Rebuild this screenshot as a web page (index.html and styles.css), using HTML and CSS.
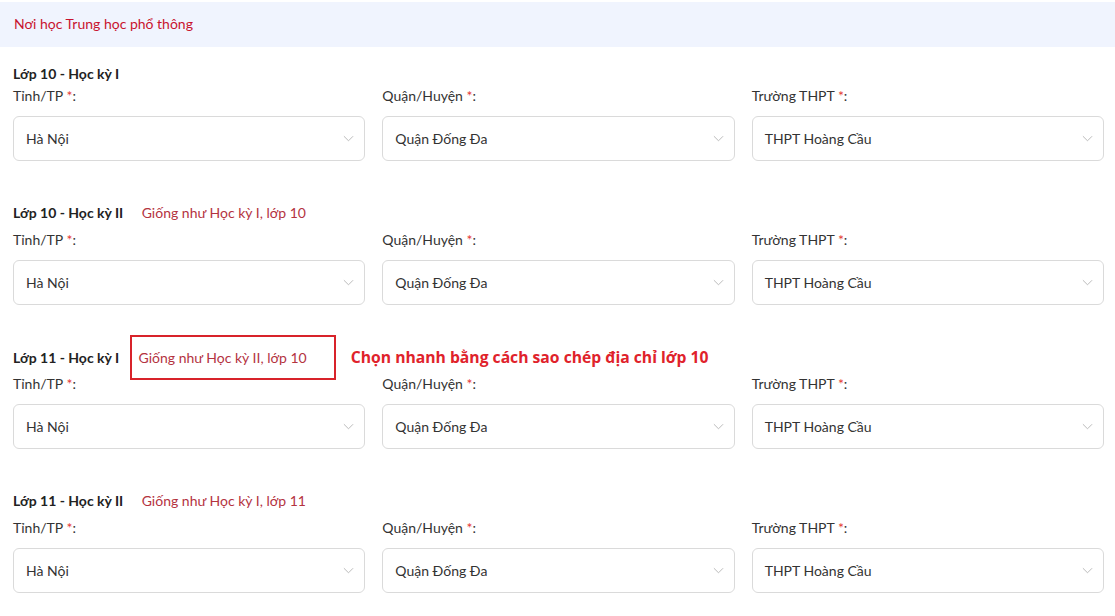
FILE: index.html
```html
<!DOCTYPE html>
<html lang="vi">
<head>
    <meta charset="UTF-8">
    <title>Nơi học Trung học phổ thông</title>
    <link rel="stylesheet" href="styles.css">
</head>
<body>
    <div class="panel-header">Nơi học Trung học phổ thông</div>

    <div class="school-form">
        <!-- Lớp 10 - HK I -->
        <div class="term">
            <div class="term-title">Lớp 10 - Học kỳ I</div>
            <div class="field-grid">
                <div class="field">
                    <label>Tỉnh/TP <span class="req">*</span>:</label>
                    <div class="select"><span>Hà Nội</span><svg class="chev" viewBox="0 0 12 7"><path d="M1 1l5 5 5-5"/></svg></div>
                </div>
                <div class="field">
                    <label>Quận/Huyện <span class="req">*</span>:</label>
                    <div class="select"><span>Quận Đống Đa</span><svg class="chev" viewBox="0 0 12 7"><path d="M1 1l5 5 5-5"/></svg></div>
                </div>
                <div class="field">
                    <label>Trường THPT <span class="req">*</span>:</label>
                    <div class="select"><span>THPT Hoàng Cầu</span><svg class="chev" viewBox="0 0 12 7"><path d="M1 1l5 5 5-5"/></svg></div>
                </div>
            </div>
        </div>

        <!-- Lớp 10 - HK II -->
        <div class="term">
            <div class="term-title">Lớp 10 - Học kỳ II <a class="copy-link">Giống như Học kỳ I, lớp 10</a></div>
            <div class="field-grid">
                <div class="field">
                    <label>Tỉnh/TP <span class="req">*</span>:</label>
                    <div class="select"><span>Hà Nội</span><svg class="chev" viewBox="0 0 12 7"><path d="M1 1l5 5 5-5"/></svg></div>
                </div>
                <div class="field">
                    <label>Quận/Huyện <span class="req">*</span>:</label>
                    <div class="select"><span>Quận Đống Đa</span><svg class="chev" viewBox="0 0 12 7"><path d="M1 1l5 5 5-5"/></svg></div>
                </div>
                <div class="field">
                    <label>Trường THPT <span class="req">*</span>:</label>
                    <div class="select"><span>THPT Hoàng Cầu</span><svg class="chev" viewBox="0 0 12 7"><path d="M1 1l5 5 5-5"/></svg></div>
                </div>
            </div>
        </div>

        <!-- Lớp 11 - HK I (có chú thích) -->
        <div class="term">
            <div class="term-title">Lớp 11 - Học kỳ I <a class="copy-link marked">Giống như Học kỳ II, lớp 10</a><span class="note">Chọn nhanh bằng cách sao chép địa chỉ lớp 10</span></div>
            <div class="field-grid">
                <div class="field">
                    <label>Tỉnh/TP <span class="req">*</span>:</label>
                    <div class="select"><span>Hà Nội</span><svg class="chev" viewBox="0 0 12 7"><path d="M1 1l5 5 5-5"/></svg></div>
                </div>
                <div class="field">
                    <label>Quận/Huyện <span class="req">*</span>:</label>
                    <div class="select"><span>Quận Đống Đa</span><svg class="chev" viewBox="0 0 12 7"><path d="M1 1l5 5 5-5"/></svg></div>
                </div>
                <div class="field">
                    <label>Trường THPT <span class="req">*</span>:</label>
                    <div class="select"><span>THPT Hoàng Cầu</span><svg class="chev" viewBox="0 0 12 7"><path d="M1 1l5 5 5-5"/></svg></div>
                </div>
            </div>
        </div>

        <!-- Lớp 11 - HK II -->
        <div class="term">
            <div class="term-title">Lớp 11 - Học kỳ II <a class="copy-link">Giống như Học kỳ I, lớp 11</a></div>
            <div class="field-grid">
                <div class="field">
                    <label>Tỉnh/TP <span class="req">*</span>:</label>
                    <div class="select"><span>Hà Nội</span><svg class="chev" viewBox="0 0 12 7"><path d="M1 1l5 5 5-5"/></svg></div>
                </div>
                <div class="field">
                    <label>Quận/Huyện <span class="req">*</span>:</label>
                    <div class="select"><span>Quận Đống Đa</span><svg class="chev" viewBox="0 0 12 7"><path d="M1 1l5 5 5-5"/></svg></div>
                </div>
                <div class="field">
                    <label>Trường THPT <span class="req">*</span>:</label>
                    <div class="select"><span>THPT Hoàng Cầu</span><svg class="chev" viewBox="0 0 12 7"><path d="M1 1l5 5 5-5"/></svg></div>
                </div>
            </div>
        </div>
    </div>
</body>
</html>
```

FILE: styles.css
```css
* {
    margin: 0;
    padding: 0;
    box-sizing: border-box;
}

body {
    font-family: Lato, 'Open Sans', sans-serif;
    font-size: 14px;
    color: #333;
    background: #fff;
    padding-top: 2px;
}

.panel-header {
    height: 45px;
    line-height: 44px;
    padding-left: 14px;
    background: #f0f4fe;
    color: #c8132f;
    font-size: 14px;
}

.school-form {
    padding: 0 11px 0 13px;
}

.term {
    margin-top: 17px;
}

.term + .term {
    margin-top: 42px;
}

.term-title {
    height: 20px;
    line-height: 20px;
    font-size: 14px;
    font-weight: bold;
    color: #222;
    white-space: nowrap;
}

/* rows with the copy link sit a little lower */
.term + .term .term-title {
    height: 25px;
}

.copy-link {
    margin-left: 15px;
    font-weight: normal;
    color: #b4333f;
    cursor: pointer;
}

.copy-link.marked {
    margin-left: 7px;
    padding: 12px 27px 12px 7px;
    border: 2px solid #d8232a;
}

.note {
    margin-left: 15px;
    font-family: 'Open Sans', sans-serif;
    font-size: 15.7px;
    font-weight: bold;
    color: #e0222b;
}

.field-grid {
    display: grid;
    grid-template-columns: repeat(3, 1fr);
    gap: 17px;
    margin-top: 2px;
}

.field label {
    display: block;
    height: 20px;
    line-height: 20px;
    margin-bottom: 10px;
    color: #333;
}

.req {
    color: #e53935;
}

.select {
    height: 45px;
    border: 1px solid #dadada;
    border-radius: 6px;
    display: flex;
    align-items: center;
    justify-content: space-between;
    padding: 0 10px 0 12px;
    color: #333;
}

.chev {
    width: 11px;
    height: 7px;
    fill: none;
    stroke: #b5b5b5;
    stroke-width: 1;
}
```
